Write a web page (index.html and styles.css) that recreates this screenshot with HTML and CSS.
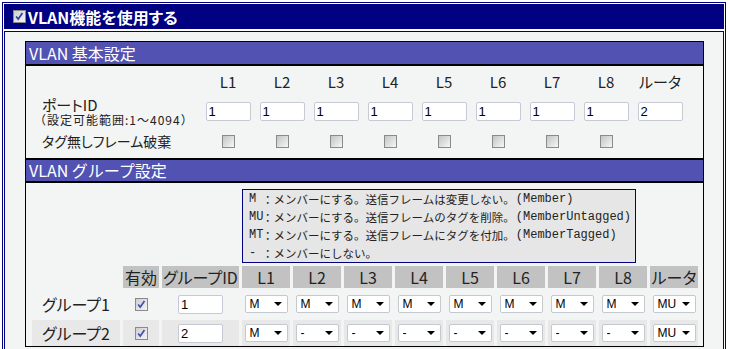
FILE: index.html
```html
<!DOCTYPE html>
<html lang="ja">
<head>
  <meta charset="UTF-8">
  <title>VLAN設定</title>
  <link rel="stylesheet" href="styles.css">
</head>
<body>
  <div class="frame">
    <!-- VLAN on/off -->
    <div class="title">
      <span class="cb on"><svg viewBox="0 0 13 13" width="11" height="11"><path d="M2.5 6.5 L5 9.5 L10 2.5" fill="none" stroke="#2e3f9e" stroke-width="2"/></svg></span>
      VLAN機能を使用する
    </div>

    <div class="content">
      <div class="panel">
        <div class="band">VLAN 基本設定</div>

        <!-- basic settings -->
        <div class="basic">
          <div></div>
          <div class="colhead">L1</div>
          <div class="colhead">L2</div>
          <div class="colhead">L3</div>
          <div class="colhead">L4</div>
          <div class="colhead">L5</div>
          <div class="colhead">L6</div>
          <div class="colhead">L7</div>
          <div class="colhead">L8</div>
          <div class="colhead">ルータ</div>

          <div class="label">
            <span class="main port">ポートID</span>
            <span class="note">（設定可能範囲:1～4094）</span>
          </div>
          <div class="cell"><input class="num" type="text" value="1"></div>
          <div class="cell"><input class="num" type="text" value="1"></div>
          <div class="cell"><input class="num" type="text" value="1"></div>
          <div class="cell"><input class="num" type="text" value="1"></div>
          <div class="cell"><input class="num" type="text" value="1"></div>
          <div class="cell"><input class="num" type="text" value="1"></div>
          <div class="cell"><input class="num" type="text" value="1"></div>
          <div class="cell"><input class="num" type="text" value="1"></div>
          <div class="cell"><input class="num" type="text" value="2"></div>

          <div class="label"><span class="main">タグ無しフレーム破棄</span></div>
          <div class="cell"><span class="cb"></span></div>
          <div class="cell"><span class="cb"></span></div>
          <div class="cell"><span class="cb"></span></div>
          <div class="cell"><span class="cb"></span></div>
          <div class="cell"><span class="cb"></span></div>
          <div class="cell"><span class="cb"></span></div>
          <div class="cell"><span class="cb"></span></div>
          <div class="cell"><span class="cb"></span></div>
          <div class="cell"></div>
        </div>

        <div class="band band-mid">VLAN グループ設定</div>

        <!-- group settings -->
        <div class="groups">
          <div class="legend">
            <div><span class="code">M</span>：メンバーにする。送信フレームは変更しない。<span class="en">(Member)</span></div>
            <div><span class="code">MU</span>：メンバーにする。送信フレームのタグを削除。<span class="en">(MemberUntagged)</span></div>
            <div><span class="code">MT</span>：メンバーにする。送信フレームにタグを付加。<span class="en">(MemberTagged)</span></div>
            <div><span class="code">-</span>：メンバーにしない。</div>
          </div>

          <div></div>
          <div class="gh">有効</div>
          <div class="gh">グループID</div>
          <div class="gh">L1</div>
          <div class="gh">L2</div>
          <div class="gh">L3</div>
          <div class="gh">L4</div>
          <div class="gh">L5</div>
          <div class="gh">L6</div>
          <div class="gh">L7</div>
          <div class="gh">L8</div>
          <div class="gh">ルータ</div>

          <div class="gc name">グループ1</div>
          <div class="gc"><span class="cb on"><svg viewBox="0 0 13 13" width="11" height="11"><path d="M2.5 6.5 L5 9.5 L10 2.5" fill="none" stroke="#3b52b8" stroke-width="2"/></svg></span></div>
          <div class="gc"><input class="num" type="text" value="1"></div>
          <div class="gc"><span class="sel"><select><option>M</option></select></span></div>
          <div class="gc"><span class="sel"><select><option>M</option></select></span></div>
          <div class="gc"><span class="sel"><select><option>M</option></select></span></div>
          <div class="gc"><span class="sel"><select><option>M</option></select></span></div>
          <div class="gc"><span class="sel"><select><option>M</option></select></span></div>
          <div class="gc"><span class="sel"><select><option>M</option></select></span></div>
          <div class="gc"><span class="sel"><select><option>M</option></select></span></div>
          <div class="gc"><span class="sel"><select><option>M</option></select></span></div>
          <div class="gc"><span class="sel"><select><option>MU</option></select></span></div>

          <div class="gc alt name">グループ2</div>
          <div class="gc alt"><span class="cb on"><svg viewBox="0 0 13 13" width="11" height="11"><path d="M2.5 6.5 L5 9.5 L10 2.5" fill="none" stroke="#3b52b8" stroke-width="2"/></svg></span></div>
          <div class="gc alt"><input class="num" type="text" value="2"></div>
          <div class="gc alt"><span class="sel"><select><option>M</option></select></span></div>
          <div class="gc alt"><span class="sel"><select><option>-</option></select></span></div>
          <div class="gc alt"><span class="sel"><select><option>-</option></select></span></div>
          <div class="gc alt"><span class="sel"><select><option>-</option></select></span></div>
          <div class="gc alt"><span class="sel"><select><option>-</option></select></span></div>
          <div class="gc alt"><span class="sel"><select><option>-</option></select></span></div>
          <div class="gc alt"><span class="sel"><select><option>-</option></select></span></div>
          <div class="gc alt"><span class="sel"><select><option>-</option></select></span></div>
          <div class="gc alt"><span class="sel"><select><option>MU</option></select></span></div>
        </div>
      </div>
    </div>
  </div>
</body>
</html>
```

FILE: styles.css
```css
/* General */
body {
  margin: 0;
  background-color: #fff;
  color: #222;
  font-family: "Noto Sans CJK JP", sans-serif;
  font-feature-settings: "palt";
}

.frame {
  width: 724px;
  box-sizing: border-box;
  margin: 2px 0 0 2px;
  padding: 1px;
  border: 1px solid #000080;
}

.title {
  height: 25px;
  display: flex;
  align-items: center;
  gap: 2px;
  padding-left: 9px;
  background-color: #000080;
  color: #fff;
  font-size: 16px;
  font-weight: bold;
  white-space: nowrap;
}

.content {
  margin-top: 2px;
  padding: 9px 19px 20px 20px;
  border: 1px solid #000080;
  background-color: #f3f4f4;
}

.panel {
  border: 1px solid #000;
}

/* section headers */
.band {
  height: 22px;
  line-height: 22px;
  padding-left: 3px;
  background-color: #5252b2;
  color: #fff;
  font-size: 16px;
  border-bottom: 2px solid #000;
  font-feature-settings: normal;
}

.band-mid {
  height: 21px;
  line-height: 21px;
  border-top: 2px solid #000;
}

/* checkbox look */
.cb {
  display: inline-flex;
  align-items: center;
  justify-content: center;
  width: 13px;
  height: 13px;
  box-sizing: border-box;
  border: 1px solid #8a8a8a;
  background: linear-gradient(135deg, #c4c4c4, #f6f6f6);
  flex-shrink: 0;
}

.cb.on {
  background: linear-gradient(135deg, #cfcfcf, #f4f4f4);
}

.num {
  width: 45px;
  height: 19px;
  box-sizing: border-box;
  padding: 0 2px;
  border: 1px solid #c6cad6;
  border-radius: 2px;
  background-color: #fff;
  font-family: "Liberation Sans", sans-serif;
  font-size: 13px;
  color: #000;
}

/* basic settings */
.basic {
  display: grid;
  grid-template-columns: 175px repeat(9, 54px);
  grid-template-rows: 30px 30px 30px;
  padding-bottom: 2px;
}

.colhead {
  display: flex;
  align-items: center;
  justify-content: center;
  font-size: 15px;
}

.label {
  display: flex;
  flex-direction: column;
  justify-content: center;
  padding-left: 16px;
  white-space: nowrap;
}

.label .main {
  font-size: 14px;
  line-height: 16px;
}

.label .port {
  font-size: 15px;
  line-height: 15px;
}

.label .note {
  margin: 1px 0 0 -8px;
  font-size: 12px;
  line-height: 13px;
  letter-spacing: 1px;
  font-feature-settings: normal;
}

.cell {
  display: flex;
  align-items: center;
  justify-content: center;
}

/* group settings */
.groups {
  display: grid;
  grid-template-columns: 88px 36px 77px repeat(9, 48px);
  grid-template-rows: 74px 22px 26px 26px;
  gap: 3px;
  margin: 6px 0 0 6px;
}

.legend {
  grid-column: 4 / 13;
  justify-self: start;
  width: 394px;
  height: 74px;
  box-sizing: border-box;
  padding-left: 6px;
  border: 1px solid #000080;
  background-color: #e6e6e6;
  font-size: 11.5px;
  color: #222;
  font-feature-settings: normal;
  white-space: nowrap;
  overflow: hidden;
}

.legend div {
  height: 18px;
  line-height: 18px;
}

.legend .code {
  display: inline-block;
  width: 13px;
}

.legend .code,
.legend .en {
  font-family: "Liberation Mono", monospace;
  font-size: 12px;
  vertical-align: top;
}

.legend .en {
  margin-left: 1px;
}

.gh {
  background-color: #c2c2c2;
  text-align: center;
  font-size: 16px;
  line-height: 22px;
  white-space: nowrap;
}

.gc {
  display: flex;
  align-items: center;
  justify-content: center;
  font-size: 16px;
}

.gc.alt {
  background-color: #e8e8e8;
}

.sel {
  position: relative;
  display: inline-block;
}

.sel select {
  display: block;
  width: 43px;
  height: 18px;
  box-sizing: border-box;
  padding: 0 0 0 4px;
  border: 1px solid #c3c9d1;
  border-radius: 2px;
  background-color: #fff;
  font-family: "Liberation Sans", sans-serif;
  font-size: 12px;
  color: #000;
  appearance: none;
  -webkit-appearance: none;
}

/* drop arrow */
.sel::after {
  content: "";
  position: absolute;
  right: 6px;
  top: 7px;
  border-left: 4px solid transparent;
  border-right: 4px solid transparent;
  border-top: 4px solid #000;
}
```
